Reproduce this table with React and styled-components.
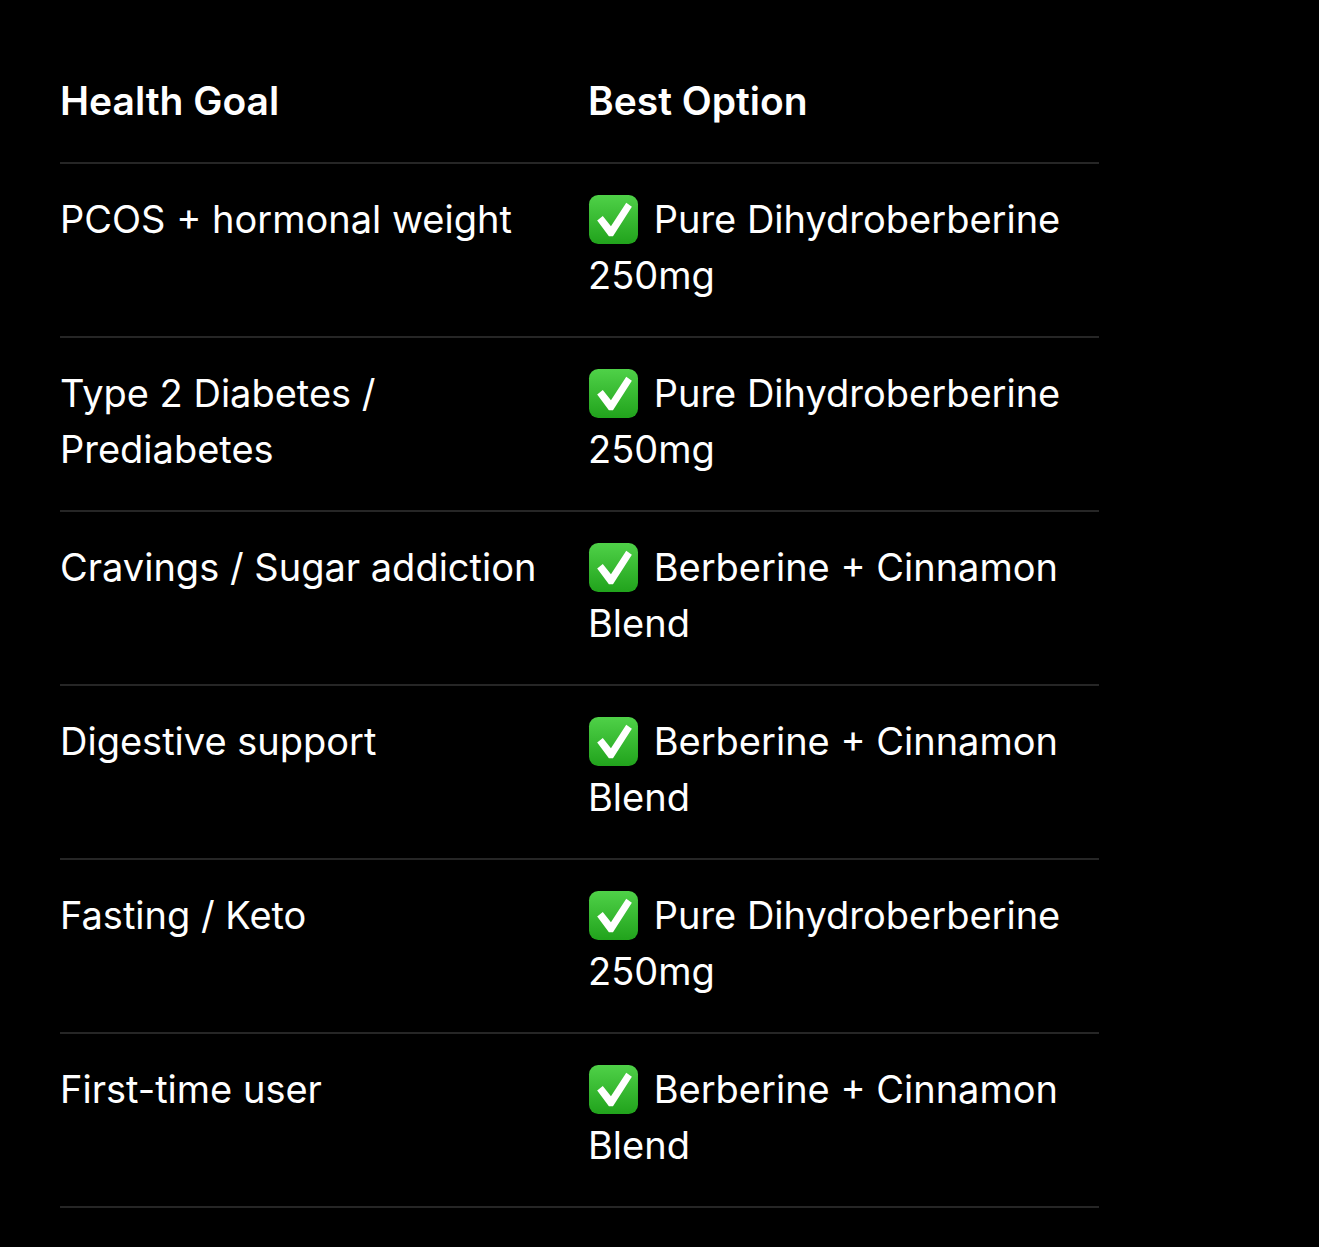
import React from 'react';
import styled, { createGlobalStyle } from 'styled-components';

const GlobalStyle = createGlobalStyle`
  html, body {
    margin: 0;
    padding: 0;
    background: #000;
  }
  body {
    font-family: Inter, "Open Sans", "Liberation Sans", sans-serif;
    color: #fff;
    -webkit-font-smoothing: antialiased;
  }
`;

const Page = styled.div`
  background: #000;
  min-height: 1247px;
  padding: 44px 60px 0;
  box-sizing: border-box;
`;

const Table = styled.table`
  width: 1039px;
  border-collapse: collapse;
  table-layout: fixed;
`;

const HeadCell = styled.th`
  text-align: left;
  font-weight: 600;
  font-size: 39px;
  line-height: 56px;
  padding: 29px 24px 33px 0;
  border-bottom: 2px solid #262626;
  width: ${props => props.$width || 'auto'};
`;

const Row = styled.tr`
  border-bottom: 2px solid #262626;
`;

const Cell = styled.td`
  vertical-align: top;
  font-size: 38px;
  font-weight: 400;
  line-height: 56px;
  padding: 27px 24px 33px 0;
`;

const CheckBox = styled.svg`
  width: 51px;
  height: 51px;
  vertical-align: -12px;
  margin-right: 4px;
`;

function CheckMark() {
  return (
    <CheckBox viewBox="0 0 50 50">
      <defs>
        <linearGradient id="ckGreen" x1="0" y1="0" x2="0" y2="1">
          <stop offset="0" stopColor="#4fd148" />
          <stop offset="1" stopColor="#21a31c" />
        </linearGradient>
      </defs>
      <rect x="1" y="1" width="48" height="48" rx="9" fill="url(#ckGreen)" />
      <path
        d="M9 26 L14.5 21.5 L22.5 31.5 L37.5 8.5 L43 12.5 L24.5 41.5 L20.5 41.5 Z"
        fill="#fff"
      />
    </CheckBox>
  );
}

const rows = [
  { goal: 'PCOS + hormonal weight', option: 'Pure Dihydroberberine 250mg' },
  { goal: 'Type 2 Diabetes / Prediabetes', option: 'Pure Dihydroberberine 250mg' },
  { goal: 'Cravings / Sugar addiction', option: 'Berberine + Cinnamon Blend' },
  { goal: 'Digestive support', option: 'Berberine + Cinnamon Blend' },
  { goal: 'Fasting / Keto', option: 'Pure Dihydroberberine 250mg' },
  { goal: 'First-time user', option: 'Berberine + Cinnamon Blend' }
];

export default function App() {
  return (
    <Page>
      <GlobalStyle />
      <Table>
        <thead>
          <tr>
            <HeadCell $width="504px">Health Goal</HeadCell>
            <HeadCell>Best Option</HeadCell>
          </tr>
        </thead>
        <tbody>
          {rows.map(r => (
            <Row key={r.goal}>
              <Cell>{r.goal}</Cell>
              <Cell>
                <CheckMark /> {r.option}
              </Cell>
            </Row>
          ))}
        </tbody>
      </Table>
    </Page>
  );
}
